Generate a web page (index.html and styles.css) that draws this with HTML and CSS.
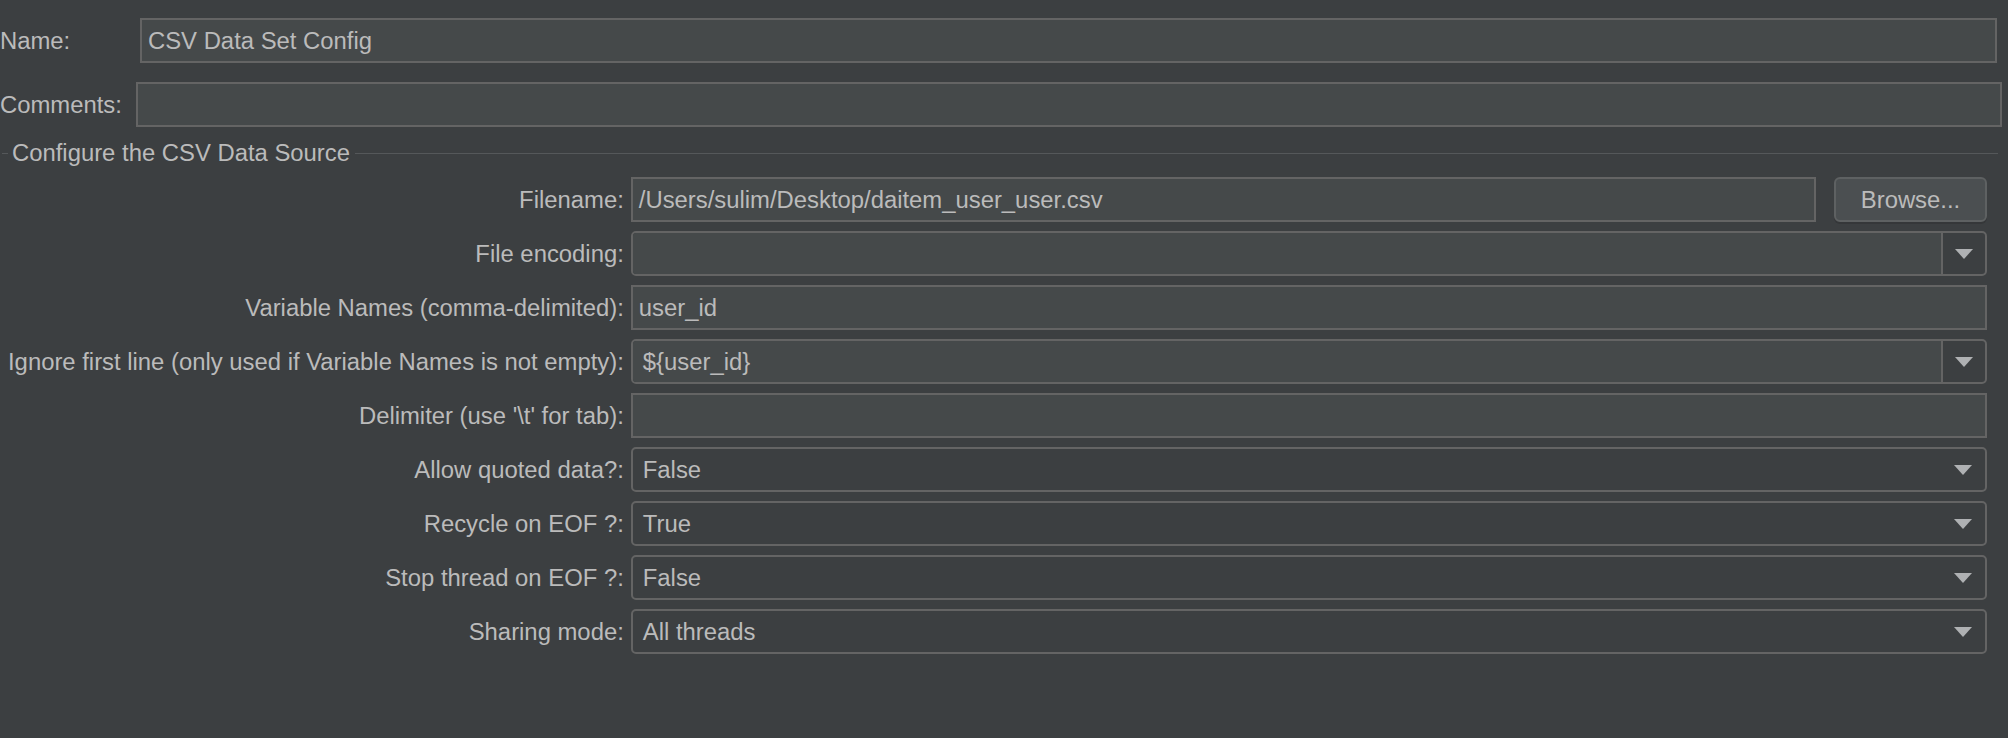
FILE: index.html
```html
<!DOCTYPE html>
<html lang="en">
<head>
    <meta charset="UTF-8">
    <title>CSV Data Set Config</title>
    <link rel="stylesheet" href="styles.css">
</head>
<body>

<div class="panel">
    <div class="top-row name-row">
        <label class="top-label">Name:</label>
        <div class="field">CSV Data Set Config</div>
    </div>
    <div class="top-row comments-row">
        <label class="top-label">Comments:</label>
        <div class="field"></div>
    </div>

    <div class="group">
        <div class="group-title"><span>Configure the CSV Data Source</span></div>

        <div class="form-grid">
            <label>Filename:</label>
            <div class="file-row">
                <div class="field">/Users/sulim/Desktop/daitem_user_user.csv</div>
                <div class="btn">Browse...</div>
            </div>

            <label>File encoding:</label>
            <div class="combo editable">
                <div class="combo-text"></div>
                <div class="combo-arrow"><svg width="18" height="10" viewBox="0 0 18 10"><path d="M0 0h18L9 10z"/></svg></div>
            </div>

            <label>Variable Names (comma-delimited):</label>
            <div class="field">user_id</div>

            <label>Ignore first line (only used if Variable Names is not empty):</label>
            <div class="combo editable">
                <div class="combo-text">${user_id}</div>
                <div class="combo-arrow"><svg width="18" height="10" viewBox="0 0 18 10"><path d="M0 0h18L9 10z"/></svg></div>
            </div>

            <label>Delimiter (use '\t' for tab):</label>
            <div class="field"></div>

            <label>Allow quoted data?:</label>
            <div class="combo">
                <div class="combo-text">False</div>
                <div class="combo-arrow"><svg width="18" height="10" viewBox="0 0 18 10"><path d="M0 0h18L9 10z"/></svg></div>
            </div>

            <label>Recycle on EOF ?:</label>
            <div class="combo">
                <div class="combo-text">True</div>
                <div class="combo-arrow"><svg width="18" height="10" viewBox="0 0 18 10"><path d="M0 0h18L9 10z"/></svg></div>
            </div>

            <label>Stop thread on EOF ?:</label>
            <div class="combo">
                <div class="combo-text">False</div>
                <div class="combo-arrow"><svg width="18" height="10" viewBox="0 0 18 10"><path d="M0 0h18L9 10z"/></svg></div>
            </div>

            <label>Sharing mode:</label>
            <div class="combo">
                <div class="combo-text">All threads</div>
                <div class="combo-arrow"><svg width="18" height="10" viewBox="0 0 18 10"><path d="M0 0h18L9 10z"/></svg></div>
            </div>
        </div>
    </div>
</div>

</body>
</html>
```

FILE: styles.css
```css
body { margin: 0; background: #3c3f41; color: #bbbbbb; font-family: "Liberation Sans", Arial, sans-serif; font-size: 23.85px; }
.panel { padding-top: 18px; }

/* name / comments */
.top-row { display: flex; align-items: center; height: 45px; }
.top-row + .top-row { margin-top: 19px; }
.name-row { padding-right: 11px; }
.name-row .top-label { width: 140px; }
.comments-row { padding-right: 6px; }
.comments-row .top-label { width: 136px; }
.top-label { flex: none; white-space: nowrap; }

.field { flex: 1; height: 45px; box-sizing: border-box; border: 2px solid #646464; background: #45494a; padding: 0 6px; display: flex; align-items: center; white-space: nowrap; }

/* titled group */
.group { margin-right: 10px; }
.group-title { display: flex; align-items: center; height: 48px; padding-top: 2px; }
.group-title::before { content: ""; width: 6px; margin-left: 2px; border-top: 1px solid #55585a; }
.group-title span { padding: 0 5px 0 4px; white-space: nowrap; }
.group-title::after { content: ""; flex: 1; border-top: 1px solid #55585a; }

.form-grid { display: grid; grid-template-columns: auto 1fr; row-gap: 9px; column-gap: 7px; padding: 0 11px 0 8px; }
.form-grid label { align-self: center; text-align: right; white-space: nowrap; }
.form-grid > .field, .form-grid > .combo, .file-row { height: 45px; }

.file-row { display: flex; gap: 18px; }
.btn { flex: none; width: 153px; height: 45px; box-sizing: border-box; border: 2px solid #5e6162; border-radius: 6px; background: #4b4f51; box-shadow: 0 2px 0 #353739; display: flex; align-items: center; justify-content: center; }

/* combo boxes */
.combo { display: flex; box-sizing: border-box; border: 2px solid #646464; border-radius: 5px; overflow: hidden; background: #3c3f41; }
.combo-text { flex: 1; display: flex; align-items: center; padding: 0 10px; white-space: nowrap; }
.combo.editable .combo-text { background: #45494a; }
.combo-arrow { flex: none; width: 44px; display: flex; align-items: center; justify-content: center; }
.combo.editable .combo-arrow { width: 42px; border-left: 2px solid #646464; }
.combo-arrow svg { fill: #afb1b3; }
```
